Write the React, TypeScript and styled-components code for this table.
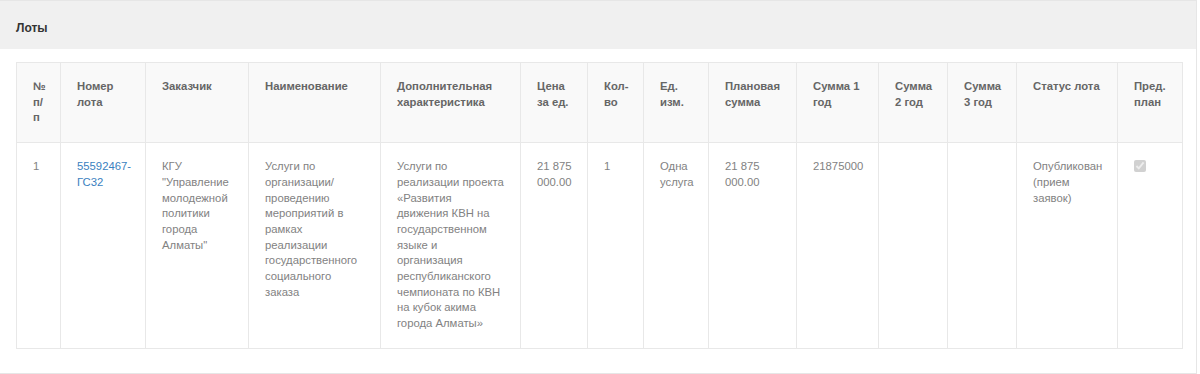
import styled, { createGlobalStyle } from "styled-components"

const GlobalStyle = createGlobalStyle`
  body {
    margin: 0;
    background: #fff;
    font-family: "Liberation Sans", Arial, sans-serif;
  }
`

const Panel = styled.section`
  width: 1197px;
  border: 1px solid #e6e6e6;
  border-left: none;
  box-sizing: border-box;
  background: #fff;
`

const PanelHeading = styled.div`
  height: 48px;
  box-sizing: border-box;
  display: flex;
  align-items: center;
  padding: 5px 16px 0;
  background: #f0f0f0;
`

const PanelTitle = styled.h3`
  margin: 0;
  font-size: 12px;
  font-weight: 700;
  color: #333;
`

const PanelBody = styled.div`
  padding: 13px 15px 24px 16px;
`

const Table = styled.table`
  width: 1166px;
  table-layout: fixed;
  border-collapse: collapse;
  font-size: 11.3px;
  line-height: 15.7px;
`

const HeadCell = styled.th`
  padding: 16px;
  text-align: left;
  vertical-align: top;
  font-weight: 700;
  color: #666;
  background: #f9f9f9;
  border: 1px solid #e8e8e8;
`

const Cell = styled.td`
  padding: 16px;
  vertical-align: top;
  color: #828282;
  border: 1px solid #e8e8e8;
`

const LotLink = styled.a`
  color: #3a7fc0;
  text-decoration: none;
`

const PlanCheck = styled.input`
  margin: 1px 0 0;
  width: 12px;
  height: 12px;
`

const COLUMNS = [
  { title: "№ п/п", width: 44 },
  { title: "Номер лота", width: 85 },
  { title: "Заказчик", width: 103 },
  { title: "Наименование", width: 132 },
  { title: "Дополнительная характеристика", width: 140 },
  { title: "Цена за ед.", width: 67 },
  { title: "Кол-во", width: 56 },
  { title: "Ед. изм.", width: 65 },
  { title: "Плановая сумма", width: 88 },
  { title: "Сумма 1 год", width: 82 },
  { title: "Сумма 2 год", width: 69 },
  { title: "Сумма 3 год", width: 69 },
  { title: "Статус лота", width: 101 },
  { title: "Пред. план", width: 65 },
]

// thousands separated by a no-break space inside the first group, as on the site
const LOTS = [
  {
    id: "1",
    number: "55592467-ГС32",
    customer: "КГУ \"Управление молодежной политики города Алматы\"",
    name: "Услуги по организации/ проведению мероприятий в рамках реализации государственного социального заказа",
    extra: "Услуги по реализации проекта «Развития движения КВН на государственном языке и организация республиканского чемпионата по КВН на кубок акима города Алматы»",
    price: "21\u00a0875 000.00",
    qty: "1",
    unit: "Одна услуга",
    planned: "21\u00a0875 000.00",
    year1: "21875000",
    year2: "",
    year3: "",
    status: "Опубликован (прием заявок)",
    plan: true,
  },
]

export default function App() {
  return (
    <>
      <GlobalStyle />
      <Panel>
        <PanelHeading>
          <PanelTitle>Лоты</PanelTitle>
        </PanelHeading>
        <PanelBody>
          <Table>
            <colgroup>
              {COLUMNS.map((col) => (
                <col key={col.title} style={{ width: col.width }} />
              ))}
            </colgroup>
            <thead>
              <tr>
                {COLUMNS.map((col) => (
                  <HeadCell key={col.title}>{col.title}</HeadCell>
                ))}
              </tr>
            </thead>
            <tbody>
              {LOTS.map((lot, i) => (
                <tr key={lot.id}>
                  <Cell>{i + 1}</Cell>
                  <Cell>
                    <LotLink href="#">{lot.number}</LotLink>
                  </Cell>
                  <Cell>{lot.customer}</Cell>
                  <Cell>{lot.name}</Cell>
                  <Cell>{lot.extra}</Cell>
                  <Cell>{lot.price}</Cell>
                  <Cell>{lot.qty}</Cell>
                  <Cell>{lot.unit}</Cell>
                  <Cell>{lot.planned}</Cell>
                  <Cell>{lot.year1}</Cell>
                  <Cell>{lot.year2}</Cell>
                  <Cell>{lot.year3}</Cell>
                  <Cell>{lot.status}</Cell>
                  <Cell>
                    <PlanCheck type="checkbox" checked={lot.plan} disabled readOnly />
                  </Cell>
                </tr>
              ))}
            </tbody>
          </Table>
        </PanelBody>
      </Panel>
    </>
  )
}
